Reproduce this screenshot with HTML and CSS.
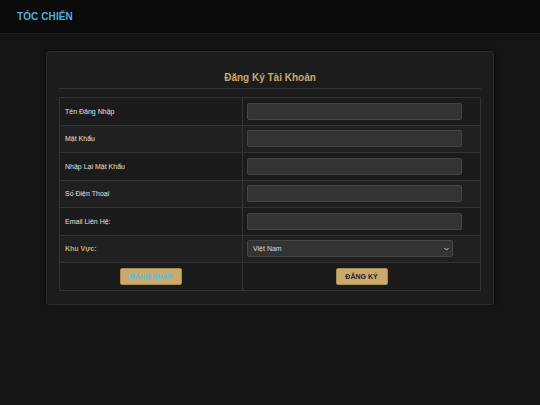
FILE: index.html
```
<!DOCTYPE html>
<html lang="vi">
<head>
<meta charset="utf-8">
<title>Tốc Chiến - Đăng Ký</title>
<link rel="stylesheet" href="styles.css">
</head>
<body>
<header class="topbar">
  <div class="brand">TÓC CHIẾN</div>
</header>
<main class="page">
  <section class="card">
    <h2 class="card-title">Đăng Ký Tài Khoản</h2>
    <form class="form-grid">
      <div class="cell label row-odd">Tên Đăng Nhập</div>
      <div class="cell field row-odd"><input class="text-input" type="text"></div>
      <div class="cell label row-even">Mật Khẩu</div>
      <div class="cell field row-even"><input class="text-input" type="password"></div>
      <div class="cell label row-odd">Nhập Lại Mật Khẩu</div>
      <div class="cell field row-odd"><input class="text-input" type="password"></div>
      <div class="cell label row-even">Số Điện Thoại</div>
      <div class="cell field row-even"><input class="text-input" type="text"></div>
      <div class="cell label row-odd">Email Liên Hệ:</div>
      <div class="cell field row-odd"><input class="text-input" type="text"></div>
      <div class="cell label label-gold row-even">Khu Vực:</div>
      <div class="cell field row-even">
        <div class="select-wrap">
          <select class="select-input">
            <option>Việt Nam</option>
          </select>
          <svg class="select-arrow" width="5" height="4" viewBox="0 0 5 4"><path d="M0.5 1 L2.5 3 L4.5 1" fill="none" stroke="#ccc" stroke-width="1"/></svg>
        </div>
      </div>
      <div class="cell center row-odd"><button type="button" class="btn btn-login">ĐĂNG NHẬP</button></div>
      <div class="cell center row-odd"><button type="button" class="btn btn-register">ĐĂNG KÝ</button></div>
    </form>
  </section>
</main>
</body>
</html>
```
FILE: styles.css
```
* { box-sizing: border-box; }
html, body {
  margin: 0;
  padding: 0;
  background: #141414;
  font-family: "Liberation Sans", Arial, sans-serif;
  color: #ddd;
}
.topbar {
  height: 34px;
  background: #0a0a0a;
  border-bottom: 1px solid #1f1f1f;
  display: flex;
  align-items: center;
  padding-left: 17px;
}
.brand {
  color: #4fb0dc;
  font-weight: bold;
  font-size: 10px;
  letter-spacing: 0.1px;
}
.page {
  padding: 17px 46px 0 46px;
}
.card {
  background: #1c1c1c;
  border: 1px solid #2b2b2b;
  border-radius: 3px;
  padding: 12px 12px 13px 12px;
  box-shadow: 0 0 4px rgba(0,0,0,0.5);
}
.card-title {
  margin: 0 0 8px 0;
  padding: 8px 0 4px 0;
  font-size: 10px;
  line-height: 12px;
  text-align: center;
  color: #c9a96e;
  border-bottom: 1px solid #333;
}
.form-grid {
  display: grid;
  grid-template-columns: 183px 1fr;
  border-top: 1px solid #333;
  border-left: 1px solid #333;
  margin: 0;
}
.cell {
  height: 27.5px;
  border-right: 1px solid #333;
  border-bottom: 1px solid #333;
  display: flex;
  align-items: center;
}
.row-odd { background: #1b1b1b; }
.row-even { background: #202020; }
.label {
  padding-left: 5px;
  font-size: 7px;
  color: #e0e0e0;
}
.label-gold {
  color: #c9a96e;
  font-weight: bold;
}
.field {
  padding-left: 4px;
}
.center {
  justify-content: center;
}
.text-input {
  display: block;
  width: 215px;
  height: 17px;
  background: #333;
  border: 1px solid #444;
  border-radius: 2px;
  color: #ddd;
  font-size: 7px;
  padding: 0 4px;
}
.select-wrap {
  position: relative;
  display: flex;
  width: 206px;
  height: 17px;
}
.select-input {
  display: block;
  -webkit-appearance: none;
  appearance: none;
  width: 206px;
  height: 17px;
  margin: 0;
  background: #333;
  border: 1px solid #444;
  border-radius: 2px;
  color: #ddd;
  font-family: "Liberation Sans", Arial, sans-serif;
  font-size: 7px;
  padding: 0 5px;
}
.select-arrow {
  position: absolute;
  right: 4px;
  top: 7px;
  pointer-events: none;
}
.btn {
  height: 17px;
  border: 1px solid #a88c52;
  border-radius: 2px;
  background: #c9a96e;
  font-family: "Liberation Sans", Arial, sans-serif;
  font-size: 7px;
  font-weight: bold;
  padding: 0;
  cursor: pointer;
}
.btn-login {
  width: 62px;
  color: #5bc0de;
}
.btn-register {
  width: 52px;
  color: #2a2218;
}
```
